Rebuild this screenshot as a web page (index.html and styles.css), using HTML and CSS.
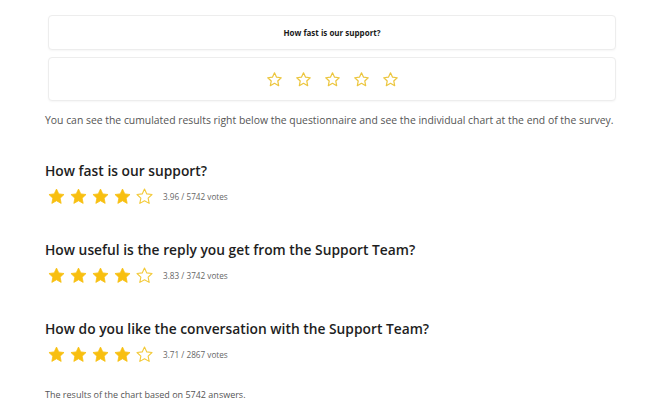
FILE: index.html
```html
<!DOCTYPE html>
<html>
<head>
<meta charset="utf-8">
<link rel="stylesheet" href="styles.css">
</head>
<body>
<svg width="0" height="0" class="defs">
  <defs>
    <path id="star" d="M12 2.6l2.9 6.1 6.6.8-4.9 4.6 1.3 6.6L12 17.4l-5.9 3.3 1.3-6.6-4.9-4.6 6.6-.8z"/>
  </defs>
</svg>
<div class="page">
  <div class="card card-title">How fast is our support?</div>
  <div class="card card-stars">
    <svg class="q-star" viewBox="0 0 24 24"><use href="#star"/></svg>
    <svg class="q-star" viewBox="0 0 24 24"><use href="#star"/></svg>
    <svg class="q-star" viewBox="0 0 24 24"><use href="#star"/></svg>
    <svg class="q-star" viewBox="0 0 24 24"><use href="#star"/></svg>
    <svg class="q-star" viewBox="0 0 24 24"><use href="#star"/></svg>
  </div>
  <p class="intro">You can see the cumulated results right below the questionnaire and see the individual chart at the end of the survey.</p>

  <div class="result">
    <h2>How fast is our support?</h2>
    <div class="rating">
      <svg class="star full" viewBox="0 0 24 24"><use href="#star"/></svg>
      <svg class="star full" viewBox="0 0 24 24"><use href="#star"/></svg>
      <svg class="star full" viewBox="0 0 24 24"><use href="#star"/></svg>
      <svg class="star full" viewBox="0 0 24 24"><use href="#star"/></svg>
      <svg class="star empty" viewBox="0 0 24 24"><use href="#star"/></svg>
      <span class="votes">3.96 / 5742 votes</span>
    </div>
  </div>

  <div class="result">
    <h2>How useful is the reply you get from the Support Team?</h2>
    <div class="rating">
      <svg class="star full" viewBox="0 0 24 24"><use href="#star"/></svg>
      <svg class="star full" viewBox="0 0 24 24"><use href="#star"/></svg>
      <svg class="star full" viewBox="0 0 24 24"><use href="#star"/></svg>
      <svg class="star full" viewBox="0 0 24 24"><use href="#star"/></svg>
      <svg class="star empty" viewBox="0 0 24 24"><use href="#star"/></svg>
      <span class="votes">3.83 / 3742 votes</span>
    </div>
  </div>

  <div class="result">
    <h2>How do you like the conversation with the Support Team?</h2>
    <div class="rating">
      <svg class="star full" viewBox="0 0 24 24"><use href="#star"/></svg>
      <svg class="star full" viewBox="0 0 24 24"><use href="#star"/></svg>
      <svg class="star full" viewBox="0 0 24 24"><use href="#star"/></svg>
      <svg class="star full" viewBox="0 0 24 24"><use href="#star"/></svg>
      <svg class="star empty" viewBox="0 0 24 24"><use href="#star"/></svg>
      <span class="votes">3.71 / 2867 votes</span>
    </div>
  </div>

  <p class="footer">The results of the chart based on 5742 answers.</p>
</div>
</body>
</html>
```

FILE: styles.css
```css
html, body {
  margin: 0;
  padding: 0;
  background: #ffffff;
}
.defs {
  position: absolute;
  width: 0;
  height: 0;
}
.page {
  font-family: "Open Sans", "DejaVu Sans", sans-serif;
  padding: 15px 34px 0 45px;
}
.card {
  margin: 0 0 0 3px;
  width: 566px;
  border: 1px solid #ededed;
  border-radius: 4px;
  box-shadow: 0 1px 2px rgba(0,0,0,0.04);
  background: #fff;
}
.card-title {
  height: 33px;
  display: flex;
  align-items: center;
  justify-content: center;
  font-size: 8px;
  font-weight: 700;
  color: #1a1a1a;
}
.card-stars {
  margin-top: 7px;
  height: 42px;
  display: flex;
  align-items: center;
  justify-content: center;
  gap: 12px;
}
.q-star {
  width: 17px;
  height: 17px;
  fill: none;
  stroke: #ecc63e;
  stroke-width: 1.7;
  stroke-linejoin: round;
}
.intro {
  margin: 11px 0 0 0;
  font-size: 10.4px;
  line-height: 16px;
  color: #555;
}
.result {
  margin-top: 33px;
}
.result + .result {
  margin-top: 34px;
}
.result h2 {
  margin: 0;
  font-size: 13.8px;
  font-weight: 600;
  line-height: 20px;
  color: #1e1e1e;
}
.rating {
  margin-top: 5px;
  display: flex;
  align-items: center;
  height: 20px;
  margin-left: 2px;
}
.star {
  width: 19px;
  height: 19px;
  margin-right: 3px;
  stroke-linejoin: round;
}
.star.full {
  fill: #f8bf10;
  stroke: #f8bf10;
  stroke-width: 1;
}
.star.empty {
  fill: none;
  stroke: #f3ca3a;
  stroke-width: 1.4;
}
.votes {
  margin-left: 6px;
  font-size: 8.2px;
  color: #666;
}
.footer {
  margin: 24px 0 0 0;
  font-size: 9px;
  color: #555;
}
```
